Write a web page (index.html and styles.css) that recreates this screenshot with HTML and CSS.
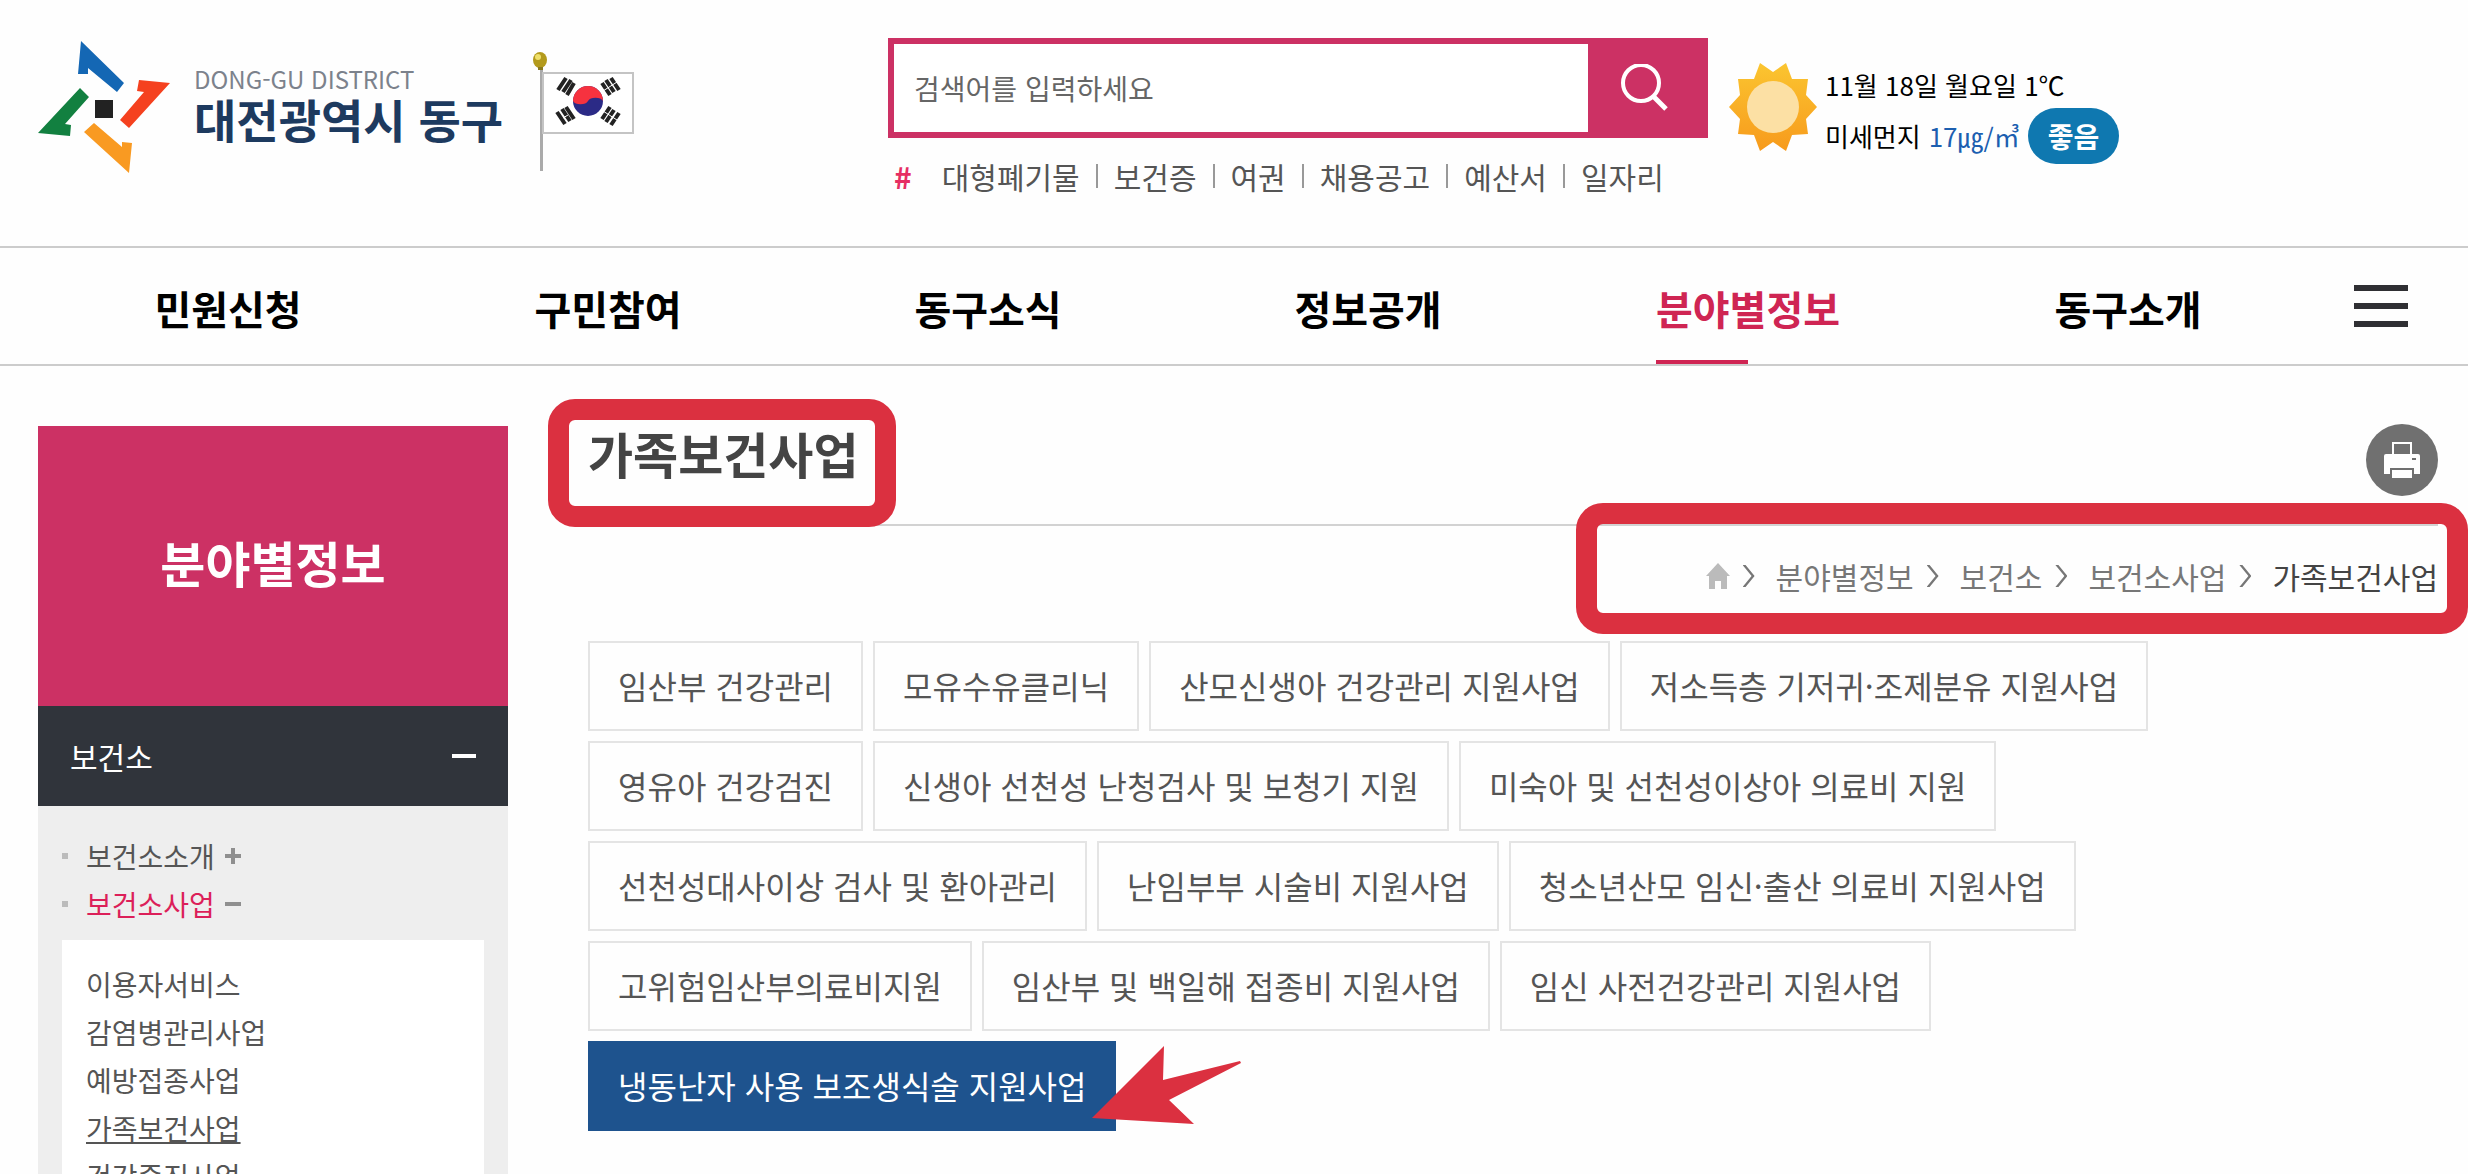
FILE: index.html
```
<!DOCTYPE html>
<html lang="ko">

<head>
    <meta charset="UTF-8">
    <meta name="viewport" content="width=device-width, initial-scale=1.0">
    <title>가족보건사업 - 대전광역시 동구</title>
    <link rel="stylesheet" href="styles.css">
</head>

<body>
    <header class="header">
        <div class="brand">
            <a class="logo" href="#">
                <svg class="logo-mark" viewBox="38 41 132 132" aria-hidden="true">
                    <polygon fill="#1467b4" points="81,41 124,83 117,92 88,68 88,74 78,74" />
                    <polygon fill="#f5411f" points="170,83 129,128 120,120 144,92 137,91 139,80" />
                    <polygon fill="#f99a22" points="84,132 94,123 122,147 122,142 132,143 129,173" />
                    <polygon fill="#128040" points="80,88 89,97 65,124 71,125 70,136 38,133" />
                    <rect fill="#222" x="95" y="100" width="18" height="18" />
                </svg>
                <span class="logo-text">
                    <span class="logo-en">DONG-GU DISTRICT</span>
                    <span class="logo-ko">대전광역시 동구</span>
                </span>
            </a>
            <svg class="flag" viewBox="532 51 104 120" role="img" aria-label="태극기">
                <rect x="539" y="66" width="3" height="105" fill="#aaa" />
                <ellipse cx="539" cy="60" rx="7" ry="8" fill="#b39a1c" />
                <circle cx="537" cy="57" r="3" fill="#efe06a" />
                <rect x="537" y="67" width="5" height="3" fill="#8a7a20" />
                <rect x="542" y="73" width="90" height="60" fill="#fff" stroke="#c4c4c4" stroke-width="2" />
                <circle cx="587" cy="101" r="15" fill="#2b2a86" />
                <path d="M572 101a15 15 0 0 1 30 0a8 5 0 0 0-15 0a8 5 0 0 1-15 0z" fill="#f6323f" />
                <g stroke="#222" stroke-width="4">
                    <path d="M557 90l8-12M562 92l8-12M566 95l7-12" />
                    <path d="M601 83l8 12M605 80l8 12M610 78l8 12" />
                    <path d="M556 112l8 12M561 109l8 12M565 107l8 12" />
                    <path d="M601 119l8-12M605 122l8-12M610 125l8-12" />
                </g>
                <g stroke="#fff" stroke-width="1">
                    <path d="M602 91l14-9M602 111l14 9M562 118l5-3" />
                </g>
            </svg>
        </div>

        <div class="search-area">
            <form class="search" action="#" method="get">
                <input class="search-input" type="text" name="query" aria-label="통합검색" placeholder="검색어를 입력하세요">
                <button class="search-button" type="submit" aria-label="검색">
                    <svg width="48" height="48" viewBox="0 0 48 48" fill="none" stroke="#fff" stroke-width="4">
                        <circle cx="21" cy="19" r="18" />
                        <path d="M33 32l13 13" stroke-width="5" />
                    </svg>
                </button>
            </form>
            <div class="keywords">
                <strong class="hash">#</strong>
                <ul class="keyword-list">
                    <li><a href="#">대형폐기물</a></li>
                    <li><a href="#">보건증</a></li>
                    <li><a href="#">여권</a></li>
                    <li><a href="#">채용공고</a></li>
                    <li><a href="#">예산서</a></li>
                    <li><a href="#">일자리</a></li>
                </ul>
            </div>
        </div>

        <div class="weather">
            <svg class="sun" viewBox="0 0 88 88" aria-hidden="true">
                <defs>
                    <linearGradient id="ray" x1="0" y1="0" x2="0" y2="1">
                        <stop offset="0" stop-color="#fbc530" />
                        <stop offset="1" stop-color="#f79a1c" />
                    </linearGradient>
                </defs>
                <polygon fill="url(#ray)" points="31,0 44,9 57,0 63,16 79,16 77,32 88,44 77,56 79,71 63,72 57,88 44,79 31,88 25,72 9,71 11,56 0,44 11,32 9,16 25,16" />
                <circle cx="44" cy="44" r="26" fill="#fce0a4" />
            </svg>
            <div class="weather-text">
                <p>11월 18일 월요일 1℃</p>
                <p>미세먼지 <span class="dust">17㎍/㎥</span> <span class="grade">좋음</span></p>
            </div>
        </div>
    </header>

    <nav class="nav">
        <ul class="nav-list">
            <li><a href="#">민원신청</a></li>
            <li><a href="#">구민참여</a></li>
            <li><a href="#">동구소식</a></li>
            <li><a href="#">정보공개</a></li>
            <li><a class="active" href="#">분야별정보</a></li>
            <li><a href="#">동구소개</a></li>
        </ul>
        <button class="menu-button" type="button" aria-label="전체메뉴">
            <span></span>
            <span></span>
            <span></span>
        </button>
    </nav>

    <div class="container">
        <aside class="sidebar">
            <h2 class="sidebar-title">분야별정보</h2>
            <a class="sidebar-group" href="#">보건소 <span class="minus"></span></a>
            <ul class="sidebar-menu">
                <li><a href="#">보건소소개 <svg width="16" height="16" viewBox="0 0 16 16"><path d="M0 8h16M8 0v16" stroke="#8f8f8f" stroke-width="4" /></svg></a></li>
                <li>
                    <a class="active" href="#">보건소사업 <svg width="16" height="16" viewBox="0 0 16 16"><path d="M0 8h16" stroke="#8f8f8f" stroke-width="4" /></svg></a>
                    <ul class="sidebar-sub">
                        <li><a href="#">이용자서비스</a></li>
                        <li><a href="#">감염병관리사업</a></li>
                        <li><a href="#">예방접종사업</a></li>
                        <li><a class="current" href="#">가족보건사업</a></li>
                        <li><a href="#">건강증진사업</a></li>
                    </ul>
                </li>
            </ul>
        </aside>

        <main class="content">
            <div class="title-row">
                <h1 class="title">가족보건사업</h1>
                <button class="print" type="button" aria-label="인쇄">
                    <svg width="36" height="36" viewBox="0 0 36 36">
                        <rect x="9" y="1" width="18" height="14" fill="none" stroke="#fff" stroke-width="2" />
                        <path d="M2 12h32q2 0 2 2v18H0V14q0-2 2-2z" fill="#fff" />
                        <path d="M6 26h24v6H6z" fill="#707070" />
                        <path d="M8 28h20v8H8z" fill="#fff" />
                        <rect x="28" y="16" width="4" height="2" fill="#707070" />
                    </svg>
                </button>
            </div>

            <nav class="breadcrumb">
                <a class="home" href="#" aria-label="홈">
                    <svg width="24" height="26" viewBox="0 0 24 26"><path d="M12 0l12 13h-3v13h-6v-8H9v8H3V13H0z" fill="#bbb" /></svg>
                </a>
                <a href="#">분야별정보</a>
                <a href="#">보건소</a>
                <a href="#">보건소사업</a>
                <a class="here" href="#">가족보건사업</a>
            </nav>

            <ul class="tabs">
                <li><a href="#">임산부 건강관리</a></li>
                <li><a href="#">모유수유클리닉</a></li>
                <li><a href="#">산모신생아 건강관리 지원사업</a></li>
                <li><a href="#">저소득층 기저귀·조제분유 지원사업</a></li>
                <li><a href="#">영유아 건강검진</a></li>
                <li><a href="#">신생아 선천성 난청검사 및 보청기 지원</a></li>
                <li><a href="#">미숙아 및 선천성이상아 의료비 지원</a></li>
                <li><a href="#">선천성대사이상 검사 및 환아관리</a></li>
                <li><a href="#">난임부부 시술비 지원사업</a></li>
                <li><a href="#">청소년산모 임신·출산 의료비 지원사업</a></li>
                <li><a href="#">고위험임산부의료비지원</a></li>
                <li><a href="#">임산부 및 백일해 접종비 지원사업</a></li>
                <li><a href="#">임신 사전건강관리 지원사업</a></li>
                <li class="selected">
                    <a href="#">냉동난자 사용 보조생식술 지원사업</a>
                    <svg class="arrow" width="150" height="80" viewBox="0 0 150 80" aria-hidden="true">
                        <polygon fill="#db3040" points="0,73 72,1 71,35 148,16 149,18 77,55 102,79" />
                    </svg>
                </li>
            </ul>
        </main>
    </div>
</body>

</html>
```
FILE: styles.css
```
* {
    box-sizing: border-box;
}

body {
    margin: 0;
    height: 100vh;
    overflow: hidden;
    background-color: #fefefe;
    color: #000;
    font-family: "Noto Sans CJK KR", "Noto Sans", sans-serif;
    font-size: 30px;
}

ul,
p,
h1,
h2 {
    margin: 0;
    padding: 0;
}

ul {
    list-style: none;
}

a {
    color: inherit;
    text-decoration: none;
}

button {
    border: none;
    padding: 0;
    cursor: pointer;
}

svg {
    display: block;
}

/* Header */
.header {
    display: grid;
    grid-template-columns: 850fr 820fr 760fr;
    min-height: 248px;
    padding: 38px 0 0 38px;
    border-bottom: 2px solid #ccc;
}

.brand {
    display: flex;
    align-items: flex-start;
    gap: 30px;
}

.logo {
    display: flex;
    gap: 24px;
    padding-top: 3px;
}

.logo-mark {
    width: 132px;
    height: 132px;
}

.logo-text {
    display: flex;
    flex-direction: column;
    padding-top: 24px;
}

.logo-en {
    color: #7c828c;
    font-size: 24px;
    line-height: 28px;
}

.logo-ko {
    color: #1d3a5f;
    font-size: 46px;
    font-weight: 700;
    line-height: 50px;
}

.flag {
    width: 104px;
    height: 120px;
    margin-top: 13px;
}

.search {
    display: flex;
    height: 100px;
    border: 6px solid #cc3164;
    background-color: #cc3164;
}

.search-input {
    flex: 1;
    min-width: 0;
    padding: 0 20px;
    border: none;
    background-color: #fff;
    font-family: inherit;
    font-size: 28px;
}

.search-input::placeholder {
    color: #666;
    opacity: 1;
}

.search-button {
    width: 114px;
    padding-left: 32px;
    background-color: #cc3164;
}

.keywords {
    display: flex;
    align-items: center;
    gap: 30px;
    padding: 16px 0 0 6px;
    color: #555;
    line-height: 44px;
}

.hash {
    color: #e62e63;
}

.keyword-list {
    display: flex;
}

.keyword-list li {
    display: flex;
    align-items: center;
}

.keyword-list li + li::before {
    content: "";
    width: 2px;
    height: 24px;
    margin: 0 16px;
    background-color: #999;
}

.weather {
    display: flex;
    align-items: flex-start;
    gap: 8px;
    padding-left: 21px;
    font-size: 26px;
}

.sun {
    width: 88px;
    height: 88px;
    margin-top: 25px;
}

.weather-text {
    padding-top: 24px;
}

.weather-text p {
    line-height: 46px;
}

.weather-text p + p {
    display: flex;
    align-items: center;
    gap: 8px;
    line-height: 56px;
}

.dust {
    color: #1c5fb0;
}

.grade {
    padding: 0 20px;
    border-radius: 28px;
    background-color: #0f78b0;
    color: #fff;
    font-size: 28px;
    font-weight: 700;
}

/* Main menu */
.nav {
    display: flex;
    align-items: center;
    padding: 0 60px 0 38px;
    border-bottom: 2px solid #ccc;
}

.nav-list {
    display: flex;
    flex: 1;
    margin-right: 36px;
}

.nav-list li {
    flex: 1;
    text-align: center;
}

.nav-list a {
    display: inline-block;
    padding-top: 4px;
    font-size: 40px;
    font-weight: 700;
    line-height: 112px;
}

.nav-list .active {
    background: linear-gradient(#cf2553, #cf2553) left bottom / 50% 4px no-repeat;
    color: #cf2553;
}

.menu-button {
    display: flex;
    flex-direction: column;
    gap: 12px;
    background: none;
}

.menu-button span {
    width: 54px;
    height: 6px;
    background-color: #2f2f33;
}

/* Sidebar */
.container {
    display: flex;
    align-items: flex-start;
    gap: 80px;
    padding: 60px 30px 0 38px;
}

.sidebar {
    flex: 0 0 470px;
    background-color: #eee;
}

.sidebar-title {
    padding-bottom: 8px;
    background-color: #cc3164;
    color: #fff;
    font-size: 49px;
    font-weight: 700;
    line-height: 272px;
    text-align: center;
}

.sidebar-group {
    display: flex;
    align-items: center;
    justify-content: space-between;
    padding: 0 32px;
    background-color: #30343b;
    color: #fff;
    line-height: 100px;
}

.minus {
    width: 24px;
    height: 4px;
    background-color: #fff;
}

.sidebar-menu {
    padding: 26px 24px;
    color: #555;
    font-size: 28px;
    line-height: 48px;
}

.sidebar-menu > li > a {
    display: flex;
    align-items: center;
    gap: 10px;
}

.sidebar-menu > li > a::before {
    content: "";
    width: 6px;
    height: 6px;
    margin-right: 8px;
    background-color: #bbb;
}

.sidebar-menu .active {
    color: #dc1f59;
}

.sidebar-sub {
    margin-top: 12px;
    padding: 20px 24px;
    background-color: #fff;
}

.current {
    text-decoration: underline;
}

/* Content */
.content {
    flex: 1;
    min-width: 0;
}

.title-row {
    display: flex;
    align-items: flex-start;
    justify-content: space-between;
    height: 100px;
    border-bottom: 2px solid #d2d2d2;
}

.title {
    position: relative;
    color: #444;
    font-size: 49px;
    font-weight: 700;
    line-height: 54px;
}

.title::after,
.breadcrumb::after {
    content: "";
    position: absolute;
    border: 21px solid #db3040;
    border-radius: 27px;
}

.title::after {
    inset: -27px -38px -47px -40px;
}

.print {
    display: flex;
    align-items: center;
    justify-content: center;
    width: 72px;
    height: 72px;
    margin-top: -2px;
    border-radius: 50%;
    background-color: #707070;
}

.breadcrumb {
    position: relative;
    display: flex;
    align-items: center;
    width: fit-content;
    margin: 28px 0 0 auto;
    color: #777;
    line-height: 44px;
}

.breadcrumb::after {
    inset: -51px -30px -36px -130px;
}

.breadcrumb a {
    display: flex;
    align-items: center;
}

.breadcrumb a + a::before {
    content: "";
    width: 12px;
    height: 22px;
    margin: 0 21px 0 13px;
    background-color: #777;
    clip-path: polygon(0 0, 3px 0, 100% 50%, 3px 100%, 0 100%, 9px 50%);
}

.breadcrumb .here {
    color: #444;
}

.tabs {
    display: flex;
    flex-wrap: wrap;
    gap: 10px;
    max-width: 1600px;
    margin-top: 43px;
    color: #555;
    font-size: 32px;
}

.tabs a {
    display: block;
    padding: 0 28px 2px;
    border: 2px solid #e4e4e4;
    line-height: 84px;
}

.tabs .selected {
    position: relative;
}

.selected a {
    border-color: #1e538e;
    background-color: #1e538e;
    color: #fff;
}

.arrow {
    position: absolute;
    top: 4px;
    right: -126px;
}
```
